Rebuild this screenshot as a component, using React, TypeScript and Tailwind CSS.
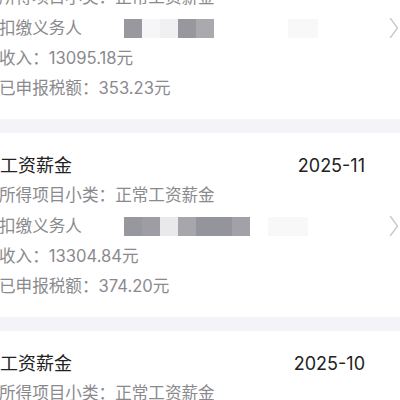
type Record = {
  title?: string;
  month?: string;
  income?: string;
  tax?: string;
  blocks: string[];
  faint: { left: number; width: number };
};

const FONT = "font-['Inter','Noto_Sans_CJK_SC','Noto_Sans',sans-serif]";

function Chevron() {
  return (
    <svg width="10" height="22" viewBox="0 0 10 22" fill="none" className="shrink-0">
      <path d="M1.5 1.5 L8.5 11 L1.5 20.5" stroke="#c9c9ce" strokeWidth="1.4" strokeLinecap="round" strokeLinejoin="round" />
    </svg>
  );
}

function Blur({ blocks, faint }: { blocks: string[]; faint: Record["faint"] }) {
  return (
    <div className="ml-[41px] flex h-[19px] items-center">
      {blocks.map((c, i) => (
        <div key={i} className="h-full w-[18px]" style={{ backgroundColor: c }} />
      ))}
      <div
        className="h-[19px] bg-[#f8f8f9]"
        style={{ marginLeft: faint.left, width: faint.width }}
      />
    </div>
  );
}

function Card({ r, cut }: { r: Record; cut?: boolean }) {
  return (
    <div className={`bg-white ${cut ? "-mt-[18px] pb-[16px]" : "pt-[17px] pb-[16px]"}`}>
      {r.title && (
        <div className="flex h-[30px] items-center justify-between pr-[35px] text-[18px] text-[#222222]">
          <span>{r.title}</span>
          <span>{r.month}</span>
        </div>
      )}
      <div className="-ml-[1px] whitespace-nowrap text-[16.6px] text-[#8a8a8e]">
        <div className="flex h-[31px] items-center">所得项目小类：正常工资薪金</div>
        <div className="flex h-[30px] items-center">
          <span className="w-[84px] shrink-0">扣缴义务人</span>
          <Blur blocks={r.blocks} faint={r.faint} />
          <div className="ml-auto flex items-center pr-[1px]">
            <Chevron />
          </div>
        </div>
        {r.income && <div className="flex h-[30px] items-center">收入：{r.income}元</div>}
        {r.tax && <div className="flex h-[30px] items-center">已申报税额：{r.tax}元</div>}
      </div>
    </div>
  );
}

export default function App() {
  const first: Record = {
    income: "13095.18",
    tax: "353.23",
    blocks: ["#98989e", "#f6f6f8", "#f0f0f2", "#97979d", "#a9a9ae"],
    faint: { left: 74, width: 30 },
  };
  const second: Record = {
    title: "工资薪金",
    month: "2025-11",
    income: "13304.84",
    tax: "374.20",
    blocks: ["#97979e", "#9d9da3", "#e9e9ec", "#a6a6ab", "#94949c", "#94949c", "#a1a1a7"],
    faint: { left: 18, width: 40 },
  };
  const third: Record = {
    title: "工资薪金",
    month: "2025-10",
    blocks: [],
    faint: { left: 0, width: 0 },
  };

  return (
    <div className={`h-[400px] w-[400px] overflow-hidden bg-white ${FONT}`}>
      <Card r={first} cut />
      <div className="h-[14px] bg-[#f4f4f8]" />
      <Card r={second} />
      <div className="h-[14px] bg-[#f4f4f8]" />
      <Card r={third} />
    </div>
  );
}
